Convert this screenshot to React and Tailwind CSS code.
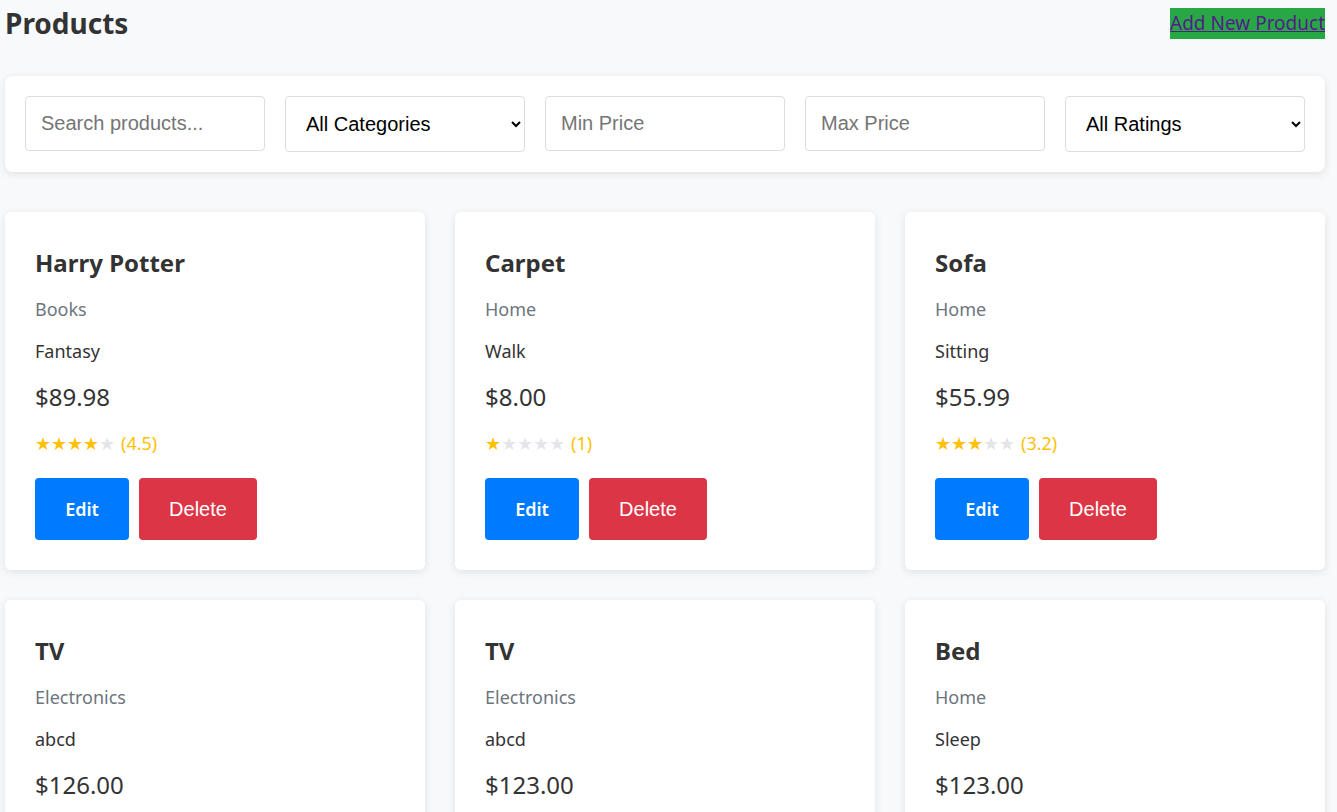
import React from 'react';

const products = [
  { id: 1, name: 'Harry Potter', category: 'Books', description: 'Fantasy', price: 89.98, rating: 4.5, filled: 4 },
  { id: 2, name: 'Carpet', category: 'Home', description: 'Walk', price: 8, rating: 1, filled: 1 },
  { id: 3, name: 'Sofa', category: 'Home', description: 'Sitting', price: 55.99, rating: 3.2, filled: 3 },
  { id: 4, name: 'TV', category: 'Electronics', description: 'abcd', price: 126, rating: 4, filled: 4 },
  { id: 5, name: 'TV', category: 'Electronics', description: 'abcd', price: 123, rating: 4, filled: 4 },
  { id: 6, name: 'Bed', category: 'Home', description: 'Sleep', price: 123, rating: 4, filled: 4 },
];

const sans = { fontFamily: '"Segoe UI", "Noto Sans", sans-serif' };

const Stars = ({ filled, rating }) => (
  <div className="h-[34px] flex items-center text-[#ffc107]">
    <span className="text-[18px] leading-none">
      {[0, 1, 2, 3, 4].map((i) => (
        <span key={i} className={i < filled ? 'text-[#ffc107]' : 'text-[#e4e5e9]'}>★</span>
      ))}
    </span>
    <span className="ml-[6px] text-[18px]">({rating})</span>
  </div>
);

const ProductCard = ({ product }) => (
  <div className="bg-white rounded-md shadow-[0_2px_8px_rgba(0,0,0,0.1)] p-[30px]">
    <h3 className="text-[24px] font-bold leading-[42px] text-[#333]">{product.name}</h3>
    <p className="text-[18px] leading-[50px] text-[#6c757d]">{product.category}</p>
    <p className="text-[18px] leading-[34px] text-[#333]">{product.description}</p>
    <p className="text-[24px] leading-[58px] text-[#333]">${product.price.toFixed(2)}</p>
    <Stars filled={product.filled} rating={product.rating} />
    <div className="flex gap-[10px] mt-[18px]">
      <a className="w-[94px] h-[62px] flex items-center justify-center rounded bg-[#007bff] text-white font-semibold text-[18px]">
        Edit
      </a>
      <button
        className="w-[118px] h-[62px] rounded bg-[#dc3545] text-white text-[20px]"
        style={{ fontFamily: '"Liberation Sans", Arial, sans-serif' }}
      >
        Delete
      </button>
    </div>
  </div>
);

const inputCls =
  'w-[240px] h-[55px] border border-[#ddd] rounded px-[15px] text-[20px] bg-white placeholder:text-[#757575] outline-none';
const selectCls =
  'w-[240px] h-[56px] border border-[#ddd] rounded pl-[16px] pr-[8px] text-[20px] bg-white text-black outline-none';

export default function App() {
  return (
    <div className="h-[812px] overflow-hidden bg-[#f8f9fa] text-[#333]" style={sans}>
      <div className="w-[1320px] ml-[5px]">
        {/* Header */}
        <div className="h-[46px] flex items-center justify-between">
          <h1 className="text-[28px] font-bold">Products</h1>
          <a href="#" className="bg-[#28a745] text-[#551a8b] underline text-[19px] leading-[31px]">
            Add New Product
          </a>
        </div>

        {/* Filtres */}
        <div
          className="mt-[30px] bg-white rounded-lg shadow-[0_2px_8px_rgba(0,0,0,0.1)] p-[20px] flex items-start gap-[20px]"
          style={{ fontFamily: '"Liberation Sans", Arial, sans-serif' }}
        >
          <input className={inputCls} placeholder="Search products..." />
          <select className={selectCls}>
            <option>All Categories</option>
          </select>
          <input className={inputCls} placeholder="Min Price" />
          <input className={inputCls} placeholder="Max Price" />
          <select className={selectCls}>
            <option>All Ratings</option>
          </select>
        </div>

        {/* Liste */}
        <div className="mt-[40px] grid grid-cols-3 gap-[30px]">
          {products.map((p) => (
            <ProductCard key={p.id} product={p} />
          ))}
        </div>
      </div>
    </div>
  );
}
